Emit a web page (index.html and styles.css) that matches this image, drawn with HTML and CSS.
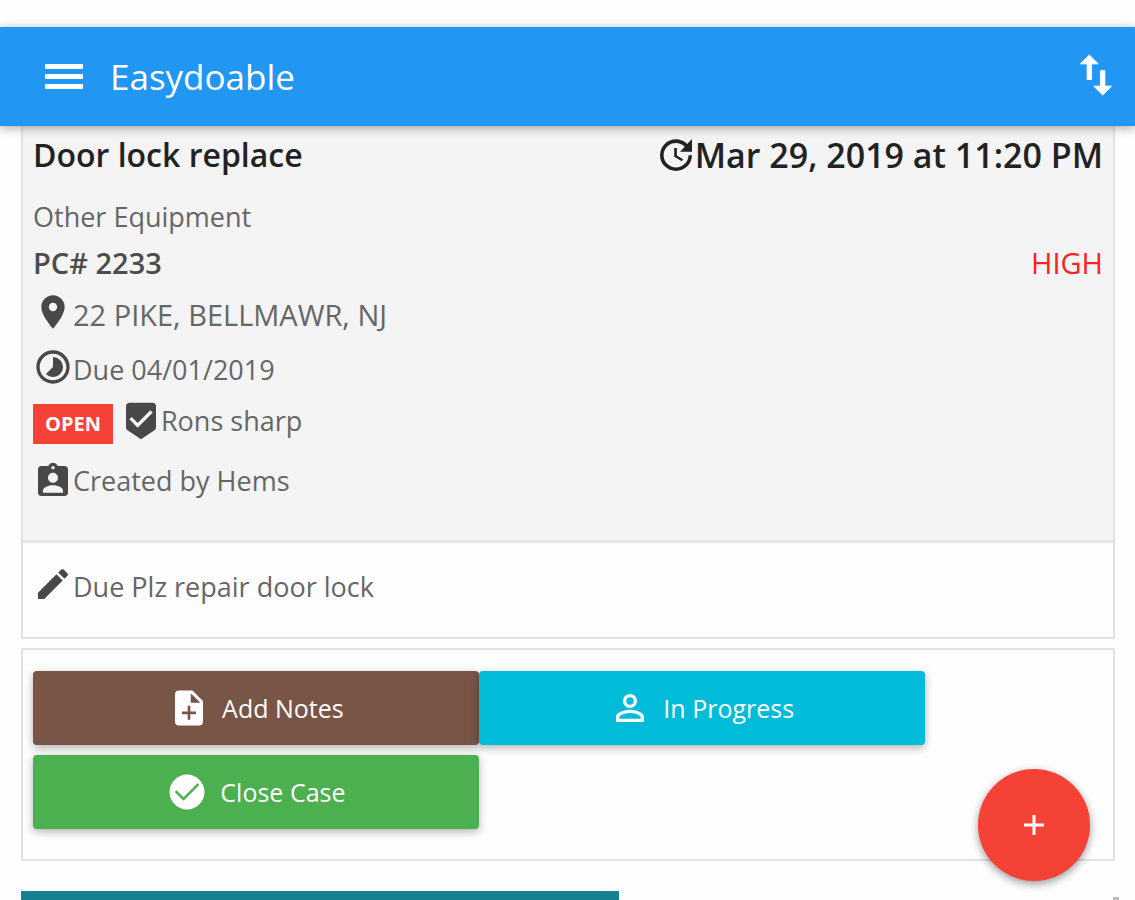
FILE: index.html
```html
<!DOCTYPE html>
<html lang="en">
<head>
<meta charset="utf-8">
<meta name="viewport" content="width=device-width, initial-scale=1">
<title>Easydoable</title>
<link rel="stylesheet" href="styles.css">
</head>
<body>
<header class="toolbar">
  <button class="icon-button" type="button" aria-label="Menu">
    <svg class="icon-menu" viewBox="0 0 38 26"><path d="M0 0h38v5H0zM0 10h38v5H0zM0 20h38v5H0z"/></svg>
  </button>
  <h1 class="brand">Easydoable</h1>
  <button class="icon-button" type="button" aria-label="Sort">
    <svg class="icon-sort" viewBox="4 3 16 18"><path d="M9 3 5 6.99h3V14h2V6.99h3L9 3zm7 14.01V10h-2v7.010h-3L15 21l4-3.990h-3z"/></svg>
  </button>
</header>
<main class="content">
  <section class="card ticket">
    <div class="summary">
      <div class="row row-title">
        <h2 class="title">Door lock replace</h2>
        <time class="title stamp" datetime="2019-03-29T23:20"><svg class="icon-update" viewBox="3 3 18 18"><path d="M21 10.120h-6.780l2.740-2.820c-2.730-2.700-7.150-2.800-9.880-.1-2.730 2.710-2.730 7.080 0 9.790s7.150 2.710 9.880 0C18.320 15.650 19 14.080 19 12.100h2c0 1.980-.88 4.550-2.640 6.290-3.510 3.480-9.210 3.480-12.720 0-3.500-3.470-3.530-9.110-.02-12.580s9.140-3.470 12.650 0L21 3v7.120zM12.500 8v4.250l3.500 2.080-.72 1.210L11 13V8h1.500z"/></svg>Mar 29, 2019 at 11:20 PM</time>
      </div>
      <p class="row row-text">Other Equipment</p>
      <div class="row row-text"><strong class="code">PC# 2233</strong><span class="priority">HIGH</span></div>
      <p class="row row-place"><svg class="icon" viewBox="0 0 24 24"><path d="M12 2C8.130 2 5 5.130 5 9c0 5.250 7 13 7 13s7-7.750 7-13c0-3.870-3.130-7-7-7zm0 9.500a2.500 2.500 0 0 1 0-5 2.500 2.500 0 0 1 0 5z"/></svg>22 PIKE, BELLMAWR, NJ</p>
      <p class="row row-due"><svg class="icon" viewBox="0 0 24 24"><path d="M16.240 7.760A5.974 5.974 0 0 0 12 6v6l-4.240 4.240c2.340 2.340 6.140 2.340 8.490 0a5.990 5.990 0 0 0-.01-8.480zM12 2C6.480 2 2 6.480 2 12s4.480 10 10 10 10-4.480 10-10S17.520 2 12 2zm0 18c-4.420 0-8-3.580-8-8s3.580-8 8-8 8 3.580 8 8-3.580 8-8 8z"/></svg>Due 04/01/2019</p>
      <p class="row row-assignee"><span class="badge">OPEN</span><svg class="icon" viewBox="0 0 24 24"><path d="M19 1H5c-1.100 0-1.990.9-1.990 2L3 15.930c0 .69.350 1.300.88 1.660L12 23l8.110-5.410c.53-.36.88-.97.88-1.660L21 3c0-1.100-.9-2-2-2zm-9 15-5-5 1.410-1.410L10 13.170l7.590-7.590L19 7l-9 9z"/></svg>Rons sharp</p>
      <p class="row row-author"><svg class="icon" viewBox="0 0 24 24"><path d="M19 3h-4.180C14.400 1.840 13.300 1 12 1s-2.400.84-2.820 2H5c-1.100 0-2 .9-2 2v14c0 1.100.9 2 2 2h14c1.100 0 2-.9 2-2V5c0-1.100-.9-2-2-2zm-7 0c.55 0 1 .45 1 1s-.45 1-1 1-1-.45-1-1 .45-1 1-1zm0 4c1.660 0 3 1.340 3 3s-1.340 3-3 3-3-1.340-3-3 1.340-3 3-3zm6 12H6v-1.400c0-2 4-3.100 6-3.100s6 1.100 6 3.100V19z"/></svg>Created by Hems</p>
    </div>
    <p class="row note"><svg class="icon" viewBox="0 0 24 24"><path d="M3 17.250V21h3.750L17.810 9.940l-3.750-3.750L3 17.250zM20.710 7.040a.996.996 0 0 0 0-1.410l-2.340-2.340a.996.996 0 0 0-1.410 0l-1.830 1.830 3.750 3.750 1.830-1.830z"/></svg>Due Plz repair door lock</p>
  </section>
  <section class="card actions">
    <button class="action brown" type="button"><svg class="icon-action" viewBox="0 0 24 24"><path d="M14 2H6c-1.100 0-1.990.9-1.990 2L4 20c0 1.100.89 2 1.990 2H18c1.100 0 2-.9 2-2V8l-6-6zm2 13.500h-3.250v3.250h-1.500V15.500H8V14h3.250v-3.250h1.500V14H16v1.500zM13 9V3.500L18.500 9H13z"/></svg>Add Notes</button>
    <button class="action cyan" type="button"><svg class="icon-action" viewBox="0 0 24 24"><path d="M12 5.900a2.100 2.100 0 1 1 0 4.200 2.100 2.100 0 0 1 0-4.200m0 9c2.970 0 6.100 1.460 6.100 2.100v1.100H5.900V17c0-.64 3.130-2.100 6.100-2.100M12 4C9.790 4 8 5.790 8 8s1.790 4 4 4 4-1.790 4-4-1.790-4-4-4zm0 9c-2.670 0-8 1.340-8 4v3h16v-3c0-2.660-5.330-4-8-4z"/></svg>In Progress</button>
    <button class="action green" type="button"><svg class="icon-action" viewBox="0 0 24 24"><path d="M12 2C6.500 2 2 6.500 2 12s4.500 10 10 10 10-4.500 10-10S17.500 2 12 2zm-2 15-5-5 1-1 4 4 8-8 1 1-9 9z"/></svg>Close Case</button>
  </section>
  <section class="next"><div class="panel"></div><div class="handle"></div></section>
</main>
<button class="fab" type="button" aria-label="Add"><svg class="icon-plus" viewBox="0 0 20 20"><path d="M8.500 0h3v8.500H20v3h-8.500V20h-3v-8.500H0v-3h8.500z"/></svg></button>
</body>
</html>
```
FILE: styles.css
```css
* { box-sizing: border-box; }
body {
  margin: 0;
  height: 100vh;
  overflow: hidden;
  display: flex;
  flex-direction: column;
  background: #fefefe;
  color: #666;
  font-family: "Open Sans", sans-serif;
}
h1, h2, p { margin: 0; }
svg { display: block; flex: none; fill: currentColor; }
button { border: 0; font: inherit; color: #fff; }

.toolbar {
  position: relative;
  z-index: 1;
  flex: none;
  display: flex;
  align-items: center;
  height: 99px;
  margin-top: 27px;
  padding: 0 21px 0 45px;
  background: #2196f3;
  color: #fff;
  box-shadow: 0 2px 10px rgba(0, 0, 0, .35);
}
.icon-button { padding: 0; background: none; }
.icon-menu { width: 38px; height: 26px; }
.icon-sort {
  width: 36px;
  height: 40px;
  margin-bottom: 4px;
  overflow: visible;
  stroke: currentColor;
  stroke-width: .4;
}
.brand { flex: 1; margin-left: 27px; font-size: 35px; font-weight: 400; }

.content { flex: 1; display: flex; flex-direction: column; padding: 0 20px 0 21px; }
.card { border: 2px solid #e2e2e2; background: #fefefe; }
.ticket { border-top: 0; }
.summary { padding: 0 10px 24px; background: #f4f4f4; border-bottom: 3px solid #e6e6e6; }
.row { display: flex; align-items: center; font-size: 27px; line-height: 40px; }
.row-title { justify-content: space-between; height: 58px; margin-bottom: 10px; }
.title { display: flex; align-items: center; font-size: 32px; font-weight: 600; color: #222; }
.stamp { font-size: 34px; }
.icon-update { width: 32px; height: 32px; margin-right: 3px; }
.row-text { justify-content: space-between; height: 46px; }
.code { font-size: 29px; font-weight: 600; color: #4c4c4c; }
.priority { font-size: 29px; color: #f22; }
.row-place { height: 58px; font-size: 29px; }
.row-due { height: 52px; }
.row-assignee { height: 50px; }
.row-author { height: 70px; }
.icon { width: 40px; height: 40px; margin-bottom: 6px; color: #484848; }
.row-assignee .icon, .row-author .icon { margin-bottom: 0; }
.badge {
  margin: 6px 8px 0 0;
  padding: 0 12px;
  background: #f44336;
  color: #fff;
  font-size: 20px;
  font-weight: 700;
}
.note { height: 94px; padding: 0 10px 6px; }

.actions {
  display: grid;
  grid-template-columns: repeat(2, 5fr) 2fr;
  row-gap: 10px;
  margin-top: 9px;
  padding: 21px 10px 30px;
}
.action {
  display: flex;
  align-items: center;
  justify-content: center;
  gap: 12px;
  height: 74px;
  border-radius: 4px;
  font-size: 25px;
  font-weight: 400;
  box-shadow: 0 3px 8px rgba(0, 0, 0, .3);
}
.icon-action { width: 42px; height: 42px; }
.brown { background: #795548; }
.cyan { background: #00bcd9; }
.green { grid-column: 1; background: #4caf50; }

.next { flex: 1; display: flex; justify-content: space-between; margin-top: 30px; }
.panel { width: 54.7%; background: #15808f; }
.handle { width: 6px; margin: 6px -4px 0 0; background: #bbb; }

.fab {
  position: fixed;
  right: 45px;
  bottom: 19px;
  width: 112px;
  height: 112px;
  display: flex;
  align-items: center;
  justify-content: center;
  border-radius: 50%;
  background: #f44336;
  box-shadow: 0 3px 8px rgba(0, 0, 0, .4);
}
.icon-plus { width: 20px; height: 20px; }
```
